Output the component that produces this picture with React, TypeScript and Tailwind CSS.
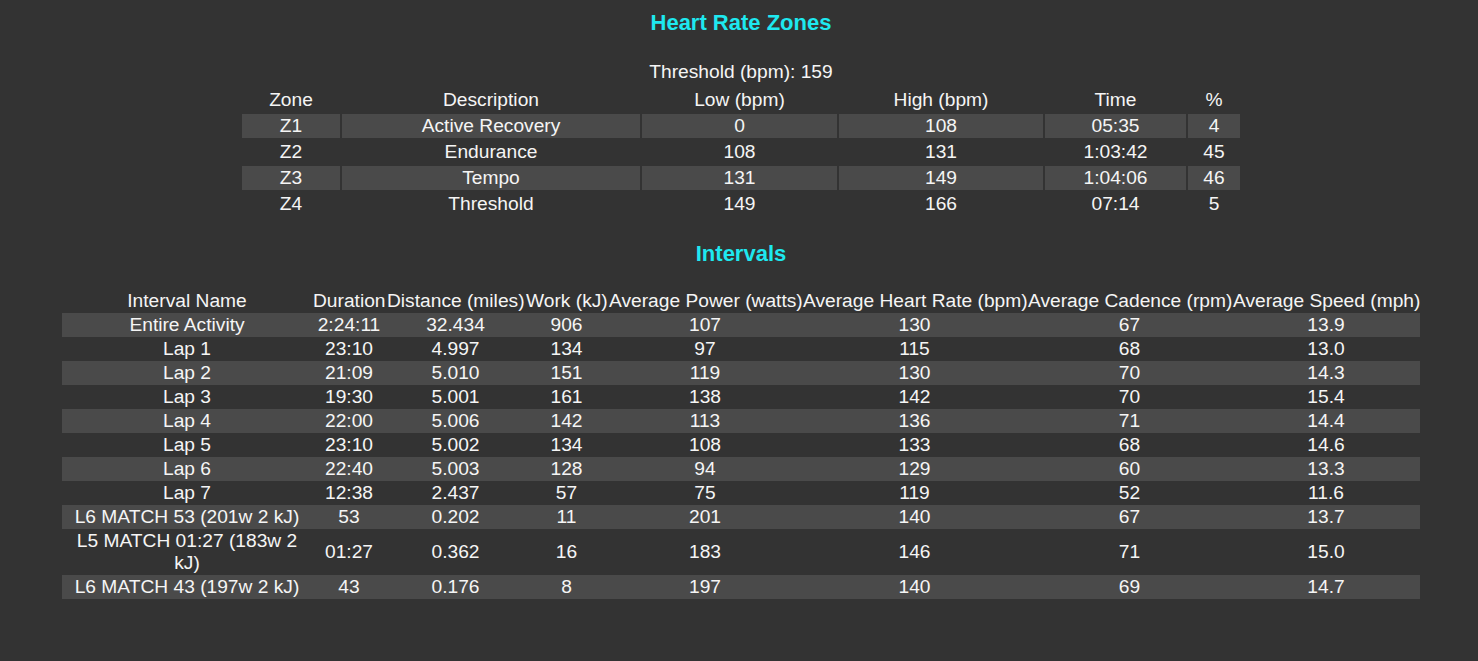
import React from 'react';

type Zone = { zone: string; description: string; low: number; high: number; time: string; pct: number };
type Interval = {
  name: string;
  duration: string;
  distance: string;
  work: number;
  power: number;
  hr: number;
  cadence: number;
  speed: string;
};

const zones: Zone[] = [
  { zone: 'Z1', description: 'Active Recovery', low: 0, high: 108, time: '05:35', pct: 4 },
  { zone: 'Z2', description: 'Endurance', low: 108, high: 131, time: '1:03:42', pct: 45 },
  { zone: 'Z3', description: 'Tempo', low: 131, high: 149, time: '1:04:06', pct: 46 },
  { zone: 'Z4', description: 'Threshold', low: 149, high: 166, time: '07:14', pct: 5 },
];

const intervals: Interval[] = [
  { name: 'Entire Activity', duration: '2:24:11', distance: '32.434', work: 906, power: 107, hr: 130, cadence: 67, speed: '13.9' },
  { name: 'Lap 1', duration: '23:10', distance: '4.997', work: 134, power: 97, hr: 115, cadence: 68, speed: '13.0' },
  { name: 'Lap 2', duration: '21:09', distance: '5.010', work: 151, power: 119, hr: 130, cadence: 70, speed: '14.3' },
  { name: 'Lap 3', duration: '19:30', distance: '5.001', work: 161, power: 138, hr: 142, cadence: 70, speed: '15.4' },
  { name: 'Lap 4', duration: '22:00', distance: '5.006', work: 142, power: 113, hr: 136, cadence: 71, speed: '14.4' },
  { name: 'Lap 5', duration: '23:10', distance: '5.002', work: 134, power: 108, hr: 133, cadence: 68, speed: '14.6' },
  { name: 'Lap 6', duration: '22:40', distance: '5.003', work: 128, power: 94, hr: 129, cadence: 60, speed: '13.3' },
  { name: 'Lap 7', duration: '12:38', distance: '2.437', work: 57, power: 75, hr: 119, cadence: 52, speed: '11.6' },
  { name: 'L6 MATCH 53 (201w 2 kJ)', duration: '53', distance: '0.202', work: 11, power: 201, hr: 140, cadence: 67, speed: '13.7' },
  { name: 'L5 MATCH 01:27 (183w 2 kJ)', duration: '01:27', distance: '0.362', work: 16, power: 183, hr: 146, cadence: 71, speed: '15.0' },
  { name: 'L6 MATCH 43 (197w 2 kJ)', duration: '43', distance: '0.176', work: 8, power: 197, hr: 140, cadence: 69, speed: '14.7' },
];

export default function App() {
  return (
    <div className="min-h-screen bg-[#333333] text-[#f5f5f5] font-['Liberation_Sans',Arial,sans-serif] text-[19.2px] leading-[22px] pl-1 pb-10">
      {/* Heart rate zones */}
      <h3 className="pt-[10px] text-center text-[22px] leading-[25px] font-bold text-[#1ee8ef]">Heart Rate Zones</h3>
      <div className="mt-[26px] mb-[3px] text-center">Threshold (bpm): 159</div>
      <table className="mx-auto border-separate border-spacing-[2px] table-fixed">
        <thead>
          <tr>
            <th className="w-[98px] p-px font-normal">Zone</th>
            <th className="w-[298px] p-px font-normal">Description</th>
            <th className="w-[195px] p-px font-normal">Low (bpm)</th>
            <th className="w-[204px] p-px font-normal">High (bpm)</th>
            <th className="w-[141px] p-px font-normal">Time</th>
            <th className="w-[52px] p-px font-normal">%</th>
          </tr>
        </thead>
        <tbody>
          {zones.map((z, i) => {
            const cell = i % 2 === 0 ? 'p-px text-center bg-[#4a4a4a]' : 'p-px text-center';
            return (
              <tr key={z.zone}>
                <td className={cell}>{z.zone}</td>
                <td className={cell}>{z.description}</td>
                <td className={cell}>{z.low}</td>
                <td className={cell}>{z.high}</td>
                <td className={cell}>{z.time}</td>
                <td className={cell}>{z.pct}</td>
              </tr>
            );
          })}
        </tbody>
      </table>

      {/* Intervals */}
      <h3 className="mt-[23px] text-center text-[22px] leading-[25px] font-bold text-[#1ee8ef]">Intervals</h3>
      <table className="mx-auto mt-[23px] w-[1358px] table-fixed">
        <thead>
          <tr className="whitespace-nowrap">
            <th className="w-[250px] p-px font-normal">Interval Name</th>
            <th className="w-[74px] p-px font-normal">Duration</th>
            <th className="w-[139px] p-px font-normal">Distance (miles)</th>
            <th className="w-[83px] p-px font-normal">Work (kJ)</th>
            <th className="w-[194px] p-px font-normal">Average Power (watts)</th>
            <th className="w-[225px] p-px font-normal">Average Heart Rate (bpm)</th>
            <th className="w-[205px] p-px font-normal">Average Cadence (rpm)</th>
            <th className="w-[188px] p-px font-normal">Average Speed (mph)</th>
          </tr>
        </thead>
        <tbody>
          {intervals.map((r, i) => (
            <tr key={r.name} className={i % 2 === 0 ? 'bg-[#4a4a4a]' : ''}>
              <td className="px-3 py-px text-center">{r.name}</td>
              <td className="p-px text-center">{r.duration}</td>
              <td className="p-px text-center">{r.distance}</td>
              <td className="p-px text-center">{r.work}</td>
              <td className="p-px text-center">{r.power}</td>
              <td className="p-px text-center">{r.hr}</td>
              <td className="p-px text-center">{r.cadence}</td>
              <td className="p-px text-center">{r.speed}</td>
            </tr>
          ))}
        </tbody>
      </table>
    </div>
  );
}
